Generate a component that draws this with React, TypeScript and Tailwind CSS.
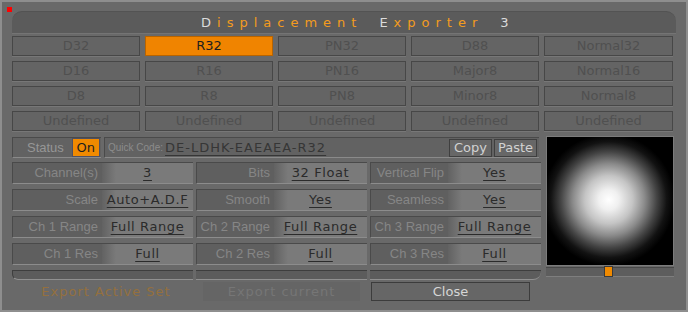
const presets = [
  ["D32", "R32", "PN32", "D88", "Normal32"],
  ["D16", "R16", "PN16", "Major8", "Normal16"],
  ["D8", "R8", "PN8", "Minor8", "Normal8"],
  ["Undefined", "Undefined", "Undefined", "Undefined", "Undefined"],
];

const params = [
  [
    ["Channel(s)", "3"],
    ["Bits", "32 Float"],
    ["Vertical Flip", "Yes"],
  ],
  [
    ["Scale", "Auto+A.D.F"],
    ["Smooth", "Yes"],
    ["Seamless", "Yes"],
  ],
  [
    ["Ch 1 Range", "Full Range"],
    ["Ch 2 Range", "Full Range"],
    ["Ch 3 Range", "Full Range"],
  ],
  [
    ["Ch 1 Res", "Full"],
    ["Ch 2 Res", "Full"],
    ["Ch 3 Res", "Full"],
  ],
];

const dv = "font-['DejaVu_Sans',sans-serif]";
const lib = "font-['Liberation_Sans',Arial,sans-serif]";

function ParamCell({ label, value, wide }: { label: string; value: string; wide?: boolean }) {
  return (
    <div className="flex h-full border-t border-l border-[#4a4a4a] border-b border-b-[#8c8c8c]">
      <div
        className={`${wide ? "w-[89px]" : "w-[77px]"} flex items-center justify-end pr-[4px] bg-[#5f5f5f] text-[13px] text-[#868686] ${lib}`}
      >
        {label}
      </div>
      <div
        className={`flex-1 flex items-center justify-center bg-[linear-gradient(to_right,#626262_0px,#7a7a7a_14px)] text-[13px] tracking-[0.6px] text-[#2b2b2b] underline underline-offset-[3px] ${dv}`}
      >
        {value}
      </div>
    </div>
  );
}

export default function App() {
  return (
    <div className="relative w-[688px] h-[312px] bg-[#696969] border-2 border-[#8e8e8e] overflow-hidden">
      {/* red close dot */}
      <div className="absolute left-[5px] top-[5px] w-[5px] h-[5px] bg-[#ff0000]" />

      <div className="pl-[10px] pt-[9px]">
        {/* title bar */}
        <div className="w-[664px] h-[22px] rounded-t-[10px] bg-[#5b5b5b] border-t border-[#535353] shadow-[0_1px_0_#747474] flex items-center pl-[189px] gap-[17px] text-[13px] tracking-[6px] font-['DejaVu_Sans',sans-serif]">
          <span>
            <span className="text-[#dcdcdc]">D</span>
            <span className="text-[#f39c1e]">isplacement</span>
          </span>
          <span>
            <span className="text-[#dcdcdc]">E</span>
            <span className="text-[#f39c1e]">xporter</span>
          </span>
          <span className="text-[#dcdcdc]">3</span>
        </div>

        {/* preset grid */}
        <div className="mt-[3px] grid grid-cols-[128px_128px_128px_128px_129px] gap-x-[5px] gap-y-[5px]">
          {presets.flat().map((p, i) => {
            const active = i === 1;
            return (
              <div
                key={i}
                className={`h-[20px] flex items-center justify-center border text-[13px] ${dv} ${
                  active
                    ? "bg-[#f08400] border-[#b86400] text-[#1e1e1e]"
                    : "bg-[#646464] border-[#474747] text-[#505050] shadow-[0_1px_0_#777777]"
                }`}
              >
                {p}
              </div>
            );
          })}
        </div>

        {/* middle section */}
        <div className="mt-[6px] flex">
          <div className="w-[530px]">
            {/* status row */}
            <div className="flex h-[21px]">
              <div className="w-[89px] flex items-center border-t border-l border-[#4a4a4a] border-b border-b-[#8a8a8a] bg-[#626262]">
                <span className={`ml-[14px] text-[13px] text-[#969696] ${lib}`}>Status</span>
                <span
                  className={`ml-[8px] w-[28px] h-[19px] flex items-center justify-center bg-[#f08a00] border border-[#505060] text-[13px] text-[#1e1e1e] ${dv}`}
                >
                  On
                </span>
              </div>
              <div className="ml-[3px] w-[435px] flex items-center border-t border-l border-[#4a4a4a] border-b border-b-[#8a8a8a] bg-[#626262]">
                <span className={`ml-[3px] text-[10px] text-[#8c8c8c] ${lib}`}>Quick Code:</span>
                <span
                  className={`ml-[2px] text-[13px] tracking-[1px] text-[#363636] underline underline-offset-[3px] ${dv}`}
                >
                  DE-LDHK-EAEAEA-R32
                </span>
                <div className="ml-auto mr-[2px] flex gap-[2px]">
                  <span
                    className={`w-[43px] h-[18px] flex items-center justify-center border border-[#3f3f3f] bg-[#676767] text-[13px] text-[#d2d2d2] ${dv}`}
                  >
                    Copy
                  </span>
                  <span
                    className={`w-[43px] h-[18px] flex items-center justify-center border border-[#3f3f3f] bg-[#676767] text-[13px] text-[#d2d2d2] ${dv}`}
                  >
                    Paste
                  </span>
                </div>
              </div>
            </div>

            {/* parameter rows */}
            <div className="mt-[4px] grid grid-cols-[181px_171px_171px] gap-x-[3px] gap-y-[5px] grid-rows-[22px_22px_22px_22px_10px]">
              {params.map((row, r) =>
                row.map(([label, value], c) => (
                  <ParamCell key={`${r}-${c}`} label={label} value={value} wide={c === 0} />
                ))
              )}
              {[0, 1, 2].map((c) => (
                <div
                  key={`bar-${c}`}
                  className={`border-t border-[#3e3e3e] border-b border-b-[#909090] bg-[#5c5c5c] ${
                    c === 0 ? "border-l rounded-bl-[6px]" : ""
                  } ${c === 2 ? "rounded-br-[8px]" : ""}`}
                />
              ))}
            </div>
          </div>

          {/* preview */}
          <div className="ml-[4px] -mt-[1px] w-[128px]">
            <div className="h-[130px] border border-[#7c7c7c] bg-[radial-gradient(circle_at_49%_49%,#ffffff_0px,#f0f0f0_10px,#c4c4c4_24px,#8a8a8a_36px,#444444_48px,#121212_58px,#000000_66px)]" />
            <div className="relative mt-[1px] h-[10px] bg-[#5d5d5d] border-t border-[#474747] border-b border-b-[#7e7e7e]">
              <div className="absolute left-[58px] -top-[2px] w-[9px] h-[11px] bg-[#f08a00] border border-[#3a3a3a]" />
            </div>
          </div>
        </div>

        {/* bottom buttons */}
        <div className="mt-[2px] flex h-[19px]">
          <div
            className={`ml-[15px] w-[158px] flex items-center justify-center text-[13px] tracking-[1px] text-[#94703e] ${dv}`}
          >
            Export Active Set
          </div>
          <div
            className={`ml-[18px] w-[157px] flex items-center justify-center bg-[#656565] text-[13px] tracking-[1px] text-[#767676] ${dv}`}
          >
            Export current
          </div>
          <div
            className={`ml-[11px] w-[159px] flex items-center justify-center border border-[#3c3c3c] bg-[#666666] text-[13px] text-[#d6d6d6] ${dv}`}
          >
            Close
          </div>
        </div>
      </div>
    </div>
  );
}
